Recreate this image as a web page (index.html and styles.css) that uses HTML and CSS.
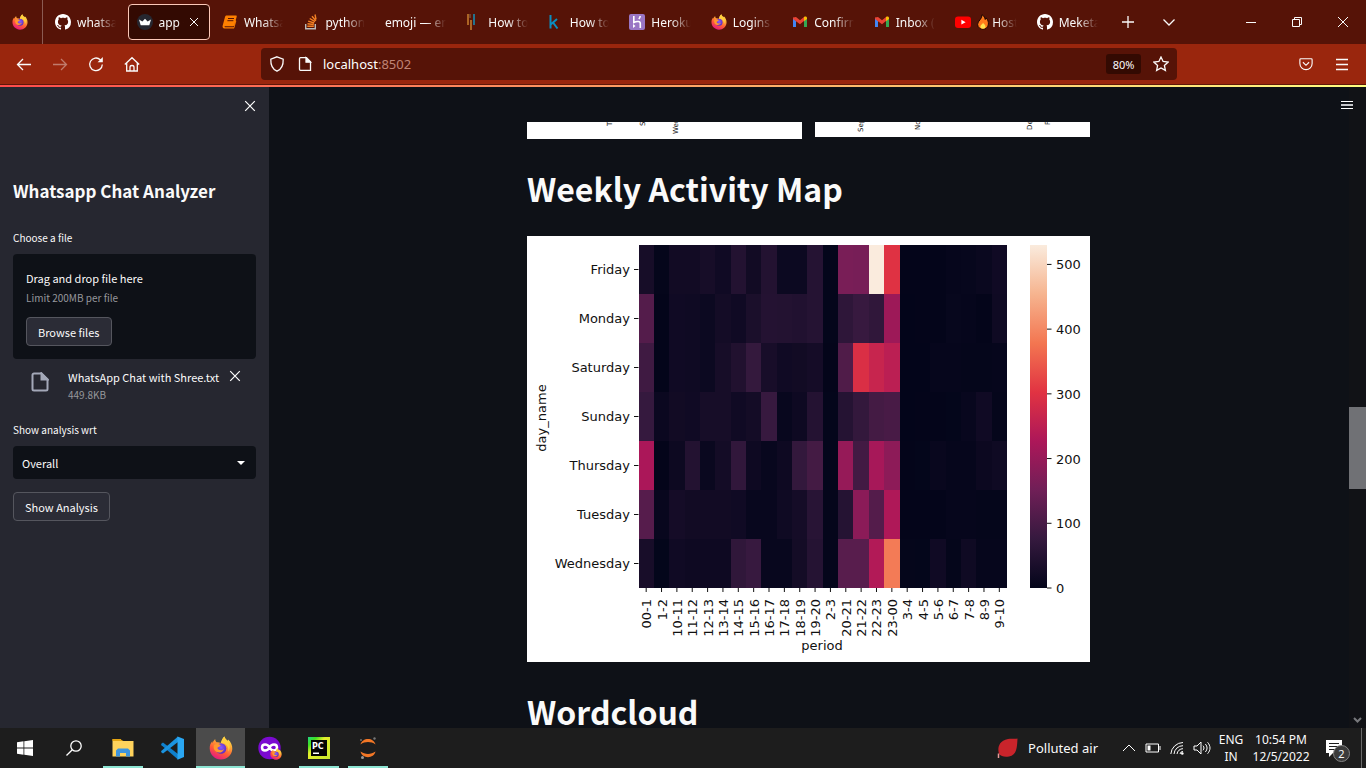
FILE: index.html
```html
<!DOCTYPE html>
<html lang="en">
<head>
<meta charset="utf-8">
<title>app · Streamlit</title>
<link rel="stylesheet" href="styles.css">
</head>
<body>
<svg class="sprite" aria-hidden="true">
  <defs>
    <linearGradient id="fox" x1="0.8" y1="0" x2="0.3" y2="1">
      <stop offset="0" stop-color="#fff44f"/><stop offset="0.35" stop-color="#ffa436"/><stop offset="0.65" stop-color="#ff5a36"/><stop offset="1" stop-color="#e31587"/>
    </linearGradient>
    <radialGradient id="globe" cx="0.5" cy="0.4" r="0.6">
      <stop offset="0" stop-color="#8a5cff"/><stop offset="1" stop-color="#5b2bbd"/>
    </radialGradient>
  </defs>
  <symbol id="i-firefox" viewBox="0 0 24 24">
    <path fill="url(#fox)" d="M15.500.5c.3 2 1.700 3 2.900 4.200.6-.2.700-.8.700-1.200C22 6 23.500 9.500 23.300 13 22.900 19.200 18 23.500 12 23.500S.8 18.700.7 12.500C.6 9.500 1.700 7 3.300 5.300l.2 2c.5-1.600 1.500-3.200 2.700-4.300 0 1.200.4 2.300 1.400 3.300 1.500-.2 3 0 4 .8C12.500 5 13.500 2 15.500.5z"/>
    <circle cx="12" cy="12.500" r="5.300" fill="url(#globe)"/>
    <path fill="#ff9a2e" d="M5 9c2-1.800 5-1.200 6.800.2-.9 1.600-2.600 1.300-3.400 2.700 1 2.600 4.600 3 6.500 1-1 4.500-7.700 5-9.700.6C4.500 12 4.500 10.500 5 9z"/>
    <path fill="#ffcf3f" d="M15.500.5c.3 2 1.700 3 2.900 4.200 2.600 3 3.100 7.300 1 10.800.5-4-1-6.500-3.600-7.800-1.400-.8-2.400-.8-3.900-.7C12.500 5 13.500 2 15.500.5z"/>
  </symbol>
  <symbol id="i-github" viewBox="0 0 16 16">
    <path fill="#fff" d="M8 0C3.580 0 0 3.580 0 8c0 3.540 2.290 6.530 5.470 7.590.4.070.55-.17.55-.38 0-.19-.01-.82-.01-1.490-2.010.37-2.530-.49-2.690-.94-.09-.23-.48-.94-.82-1.130-.28-.15-.68-.52-.01-.53.63-.01 1.080.58 1.230.82.72 1.210 1.870.87 2.330.66.070-.52.28-.87.51-1.070-1.780-.2-3.640-.89-3.640-3.950 0-.87.31-1.590.82-2.150-.08-.2-.36-1.020.08-2.120 0 0 .67-.21 2.200.82.64-.18 1.320-.27 2-.27s1.360.09 2 .27c1.530-1.040 2.200-.82 2.200-.82.44 1.100.16 1.920.08 2.120.51.56.82 1.270.82 2.150 0 3.070-1.870 3.750-3.650 3.950.29.25.54.73.54 1.480 0 1.070-.01 1.930-.01 2.200 0 .21.15.46.55.38A8.010 8.010 0 0 0 16 8c0-4.420-3.580-8-8-8z"/>
  </symbol>
  <symbol id="i-gmail" viewBox="0 0 16 16">
    <path fill="#4285f4" d="M1 3.500v9.500h3V7z"/><path fill="#34a853" d="M15 3.500v9.500h-3V7z"/>
    <path fill="#ea4335" d="M1 3.500l3-.5 4 3.200L12 3v4l-4 3.200L1 5z"/><path fill="#fbbc04" d="M12 3c1.500-1 3-.4 3 1v1l-3 2.300z"/>
  </symbol>
</svg>

<header class="browser">
  <div class="tabbar">
    <nav class="tabs" aria-label="Tabs">
      <a class="pinned" href="#" aria-label="Firefox"><svg class="fav"><use href="#i-firefox"/></svg></a>
      <a class="tab" href="#"><svg class="fav"><use href="#i-github"/></svg><span class="name">whatsap</span></a>
      <a class="tab current" href="#"><svg class="fav" viewBox="0 0 16 16"><circle cx="8" cy="8" r="8" fill="#262730"/><path fill="#fff" d="M2 5.500l3.400 2L8 4.700l2.600 2.800 3.400-2-1.700 5.700H3.700z"/></svg><span class="name">app ·</span><svg class="tab-x" viewBox="0 0 10 10"><path d="M1 1l8 8M9 1L1 9"/></svg></a>
      <a class="tab" href="#"><svg class="fav" viewBox="0 0 16 16"><path fill="#ff8000" d="M4.500 1.500h9.300c.8 0 1.100.6.9 1.200l-2.500 8.600c-.2.600-.6.900-1.200.9H3c-.8.200-.7 1 .1 1h8.600l2-7 .6.700-2 7c-.2.500-.5.700-1 .7H2.500C.8 14.600.2 13 .7 11.500L3 3c.2-.9.700-1.500 1.500-1.500z"/><path stroke="#561307" d="M6 4.500h6M5.400 6.700h6"/></svg><span class="name">Whatsa</span></a>
      <a class="tab" href="#"><svg class="fav" viewBox="0 0 16 16" fill="none"><path fill="none" stroke="#bcbbbb" stroke-width="1.400" d="M2.700 10v4.800h9.600V10"/><path fill="none" stroke="#f48024" stroke-width="1.400" d="M4.300 12.300h6.500M4.500 9.800l6.300.7M5.200 7.200l6 1.800M6.700 4.500l5.300 3.200M9 2.200l3.900 4.600M12 .5l1 5"/></svg><span class="name">python</span></a>
      <a class="tab" href="#"><span class="name">emoji — em</span></a>
      <a class="tab" href="#"><svg class="fav" viewBox="0 0 16 16"><path stroke="#c9802f" stroke-width="1.500" d="M2 0v11M5 6v10"/><path stroke="#8d6a4a" stroke-width="1" d="M4 0v4"/><path stroke="#1593bd" stroke-width="1.500" d="M8 0v11"/></svg><span class="name">How to</span></a>
      <a class="tab" href="#"><svg class="fav" viewBox="0 0 16 16"><path fill="none" stroke="#0b8ec0" stroke-width="2" d="M2.500 1v13.500M9 5L3 10.200M5 8.500l4.500 6"/></svg><span class="name">How to</span></a>
      <a class="tab" href="#"><svg class="fav" viewBox="0 0 16 16"><rect width="16" height="16" rx="2" fill="#9a75c4"/><path fill="none" stroke="#fff" stroke-width="1.600" d="M4.800 2v6.500c3-1.500 6.500-1.500 6.500 1V14M11.200 2c0 1.500-.7 2.300-1.400 3"/><path fill="#fff" d="M4 10l2.500 2L4 14z"/></svg><span class="name">Heroku</span></a>
      <a class="tab" href="#"><svg class="fav"><use href="#i-firefox"/></svg><span class="name">Logins</span></a>
      <a class="tab" href="#"><svg class="fav"><use href="#i-gmail"/></svg><span class="name">Confirm</span></a>
      <a class="tab" href="#"><svg class="fav"><use href="#i-gmail"/></svg><span class="name">Inbox (2</span></a>
      <a class="tab" href="#"><svg class="fav" viewBox="0 0 16 16"><rect y="2.500" width="16" height="11.500" rx="3" fill="#f00"/><path fill="#fff" d="M6.400 5.800l4.200 2.400-4.200 2.400z"/></svg><svg class="fire" viewBox="0 0 12 16"><path fill="#ff7a1a" stroke="#1c0500" d="M5 .7c2.500 1.500 3 3.300 3 4.800.8-.4 1-1 1.100-1.600C11 5.800 11.500 8 11.400 10c-.2 3.300-2.500 5.300-5.400 5.300S.6 13.300.6 10.300C.6 6.800 5.500 5 5 .7z"/><path fill="#ffe14d" d="M6 8.500c.3 1.500 2.500 2 2.500 4 0 1.300-1 2.300-2.500 2.300s-2.600-1-2.600-2.300C3.400 10.800 5.800 10.400 6 8.500z"/></svg><span class="name">Host</span></a>
      <a class="tab" href="#"><svg class="fav"><use href="#i-github"/></svg><span class="name">Meketa</span></a>
    </nav>
    <button class="strip-btn" aria-label="New tab"><svg viewBox="0 0 14 14"><path d="M7 1v12M1 7h12"/></svg></button>
    <button class="strip-btn" aria-label="List all tabs"><svg viewBox="0 0 14 14"><path d="M1.500 4.500L7 10l5.500-5.500"/></svg></button>
    <div class="window-btns">
      <button aria-label="Minimize"><svg viewBox="0 0 10 10"><path d="M0 5.500h10"/></svg></button>
      <button aria-label="Restore"><svg viewBox="0 0 10 10"><path d="M.5 2.500h7v7h-7zM2.500 2.500v-2h7v7h-2"/></svg></button>
      <button aria-label="Close"><svg viewBox="0 0 10 10"><path d="M0 0l10 10M10 0L0 10"/></svg></button>
    </div>
  </div>
  <div class="toolbar">
    <div class="nav-btns">
      <button aria-label="Back"><svg viewBox="0 0 16 16"><path d="M15 8.500H1.500M7 3L1.500 8.500 7 14"/></svg></button>
      <button aria-label="Forward" disabled><svg viewBox="0 0 16 16"><path d="M1 8.500h13.500M9 3l5.500 5.500L9 14"/></svg></button>
      <button aria-label="Reload"><svg viewBox="0 0 16 16"><path d="M14.300 8.500a6.300 6.300 0 1 1-2-4.800l1 1"/><path fill="currentColor" stroke="none" d="M14.800 1v5.200H9.600z"/></svg></button>
      <button aria-label="Home"><svg viewBox="0 0 16 16"><path d="M.8 8.500L8 1.700l7.200 6.800M2.700 7v8h10.600V7M6 15v-3.700c0-2.400 4-2.400 4 0V15"/></svg></button>
    </div>
    <div class="urlbar">
      <svg class="url-icon" viewBox="0 0 16 16"><path d="M8 .8l6.200 2.400c.2 5.500-1 9.800-6.200 12C2.800 13 1.600 8.700 1.800 3.200z"/></svg>
      <svg class="url-icon" viewBox="0 0 16 16"><path d="M3.500 1.700h6l4 4v8.600h-10a1 1 0 0 1-1-1V2.700a1 1 0 0 1 1-1z"/><path fill="currentColor" d="M9 1.700v4.500h4.500z"/></svg>
      <div class="url"><span class="host">localhost</span>:8502</div>
      <button class="zoom">80%</button>
      <button class="star" aria-label="Bookmark"><svg viewBox="0 0 16 16"><path d="M8 1l2.100 4.500 5 .6-3.700 3.400 1 4.900L8 12l-4.400 2.400 1-4.900L.9 6.100l5-.6z"/></svg></button>
    </div>
    <div class="tool-right">
      <button aria-label="Pocket"><svg viewBox="0 0 16 16"><path d="M2 2h12a1 1 0 0 1 1 1v4.500a7 7 0 0 1-14 0V3a1 1 0 0 1 1-1zM4.500 6L8 9.500 11.500 6"/></svg></button>
      <button aria-label="Menu"><svg viewBox="0 0 14 14"><path d="M1 2.500h12M1 7.500h12M1 12.500h12"/></svg></button>
    </div>
  </div>
</header>
<div class="rainbow"></div>

<div class="app">
  <aside class="sidebar">
    <div class="side-top"><button class="plain" aria-label="Close sidebar"><svg class="x" viewBox="0 0 10 10"><path d="M1 1l8 8M9 1L1 9"/></svg></button></div>
    <h2>Whatsapp Chat Analyzer</h2>
    <label class="field" for="browse">Choose a file</label>
    <div class="drop">
      <p class="drop-main">Drag and drop file here</p>
      <p class="small">Limit 200MB per file</p>
      <button class="btn" id="browse">Browse files</button>
    </div>
    <div class="file">
      <svg class="doc" viewBox="0 0 18 20"><path d="M3 1.500h7.500l6 6V17a1.500 1.500 0 0 1-1.500 1.500H3A1.500 1.500 0 0 1 1.500 17V3A1.500 1.500 0 0 1 3 1.500z"/><path fill="#a3a8b8" d="M10.500 1.500v6h6z"/></svg>
      <div class="file-text"><p class="file-name">WhatsApp Chat with Shree.txt</p><p class="small">449.8KB</p></div>
      <button class="plain" aria-label="Remove file"><svg class="x" viewBox="0 0 10 10"><path d="M1 1l8 8M9 1L1 9"/></svg></button>
    </div>
    <label class="field" for="user">Show analysis wrt</label>
    <div class="select">
      <select id="user"><option>Overall</option></select>
      <svg viewBox="0 0 8 4"><path fill="#fff" d="M0 0h8L4 4z"/></svg>
    </div>
    <button class="btn">Show Analysis</button>
  </aside>

  <main class="main">
    <div class="main-top"><button class="plain" aria-label="App menu"><svg class="burger" viewBox="0 0 12 10"><path stroke="#fff" d="M0 1.500h12M0 8.500h12"/><path stroke="#c4c5c9" stroke-width="2" d="M0 5h12"/></svg></button></div>
    <div class="block">
      <div class="pair">
        <svg class="clip" viewBox="0 0 275 17"><rect width="275" height="17" fill="#fff"/>
          <text transform="translate(85 4) rotate(-90)">T</text><text transform="translate(118 4) rotate(-90)">S</text><text transform="translate(151 12) rotate(-90)">Wed</text></svg>
        <svg class="clip" viewBox="0 0 275 15"><rect width="275" height="15" fill="#fff"/>
          <text transform="translate(48 10) rotate(-90)">Sep</text><text transform="translate(105 8) rotate(-90)">No</text><text transform="translate(217 8) rotate(-90)">De</text><text transform="translate(235 3) rotate(-90)">F</text></svg>
      </div>
      <h1>Weekly Activity Map</h1>
      <svg class="heatmap" id="heatmap" viewBox="0 0 563 426" role="img" aria-label="Weekly activity heatmap">
        <defs><linearGradient id="rocket" x1="0" y1="1" x2="0" y2="0">
          <stop offset="0" stop-color="#03051a"/><stop offset="0.143" stop-color="#35193e"/><stop offset="0.286" stop-color="#701f57"/><stop offset="0.429" stop-color="#ad1759"/><stop offset="0.571" stop-color="#e13342"/><stop offset="0.714" stop-color="#f37651"/><stop offset="0.857" stop-color="#f6b48f"/><stop offset="1" stop-color="#faebdd"/>
        </linearGradient></defs>
        <rect width="563" height="426" fill="#fff"/>
        <g id="cells" shape-rendering="crispEdges"></g>
        <g id="axes"></g>
        <rect x="503" y="9" width="17" height="343" fill="url(#rocket)"/>
        <text x="295" y="414" text-anchor="middle">period</text>
        <text transform="translate(19 182) rotate(-90)" text-anchor="middle">day_name</text>
      </svg>
      <h1>Wordcloud</h1>
    </div>
    <div class="scrollbar"><span class="thumb"></span><svg viewBox="0 0 9 6"><path d="M1 1l3.500 3.500L8 1"/></svg></div>
  </main>
</div>

<footer class="taskbar">
  <button class="task" aria-label="Start"><svg width="16" height="16" viewBox="0 0 16 16"><path fill="#fff" d="M0 2.200L6.500 1.300v6.300H0zM7.300 1.200L16 0v7.600H7.300zM0 8.400h6.500v6.300L0 13.800zM7.300 8.400H16V16l-8.700-1.200z"/></svg></button>
  <button class="task" aria-label="Search"><svg width="16" height="16" viewBox="0 0 16 16" fill="none" stroke="#fff" stroke-width="1.300"><circle cx="10" cy="6" r="5.200"/><path d="M6.300 9.700L.5 15.500"/></svg></button>
  <button class="task open" aria-label="File Explorer"><svg width="22" height="20" viewBox="0 0 22 20"><path fill="#e8a317" d="M.5 1h8l1.500 2h-9.500z"/><path fill="#ffd35c" d="M.5 3h21v15.500H.5z"/><path fill="#e5a512" d="M.5 3h9l2-1h-2L8.500 1h-8z"/><path fill="#3f95dd" d="M4 18.500V12.500l2-2h10l2 2v6h-4v-3.500H8v3.500z"/></svg></button>
  <button class="task" aria-label="Visual Studio Code"><svg width="24" height="24" viewBox="0 0 24 24"><path fill="#0f80cc" d="M1 8l2-1.500L18 18v5.500L1.500 9.300z"/><path fill="#1b94e0" d="M1 16l2 1.500L18 6V.5L1.500 14.700z"/><path fill="#2aa7f2" d="M17.500.5L24 3v18l-6.500 2.700z"/></svg></button>
  <button class="task open active" aria-label="Firefox"><svg width="24" height="24"><use href="#i-firefox"/></svg></button>
  <button class="task" aria-label="Firefox private"><svg width="24" height="24" viewBox="0 0 24 24"><circle cx="11.500" cy="12" r="11.200" fill="#7b0ad0"/><path fill="none" stroke="#fff" stroke-width="2.500" d="M11.500 11.500c-2-4-7.500-4-7.500 0s5.500 4 7.500 0 7.500-4 7.500 0-5.500 4-7.500 0z"/><svg x="12" y="12" width="12" height="12" viewBox="0 0 24 24"><use href="#i-firefox"/></svg></svg></button>
  <button class="task open" aria-label="PyCharm"><svg width="22" height="22" viewBox="0 0 22 22"><defs><linearGradient id="pc" x1="0" y1="0" x2="1" y2="1"><stop offset="0" stop-color="#21d789"/><stop offset="0.200" stop-color="#3fe020"/><stop offset="0.400" stop-color="#e4ee2b"/><stop offset="1" stop-color="#c8e82e"/></linearGradient></defs><rect width="22" height="22" fill="url(#pc)"/><rect x="3" y="3" width="16" height="16" fill="#050505"/><text class="pc" x="4" y="12">PC</text><path fill="#fff" d="M5 15.500h6v1.500H5z"/></svg></button>
  <button class="task open" aria-label="Jupyter"><svg width="18" height="22" viewBox="0 0 18 22"><path fill="#f37726" d="M1.500 7.500C3 0 15 0 16.500 7.500 12 4.300 6 4.300 1.500 7.500zM1.500 14.500C3 22 15 22 16.500 14.500 12 17.700 6 17.700 1.500 14.500z"/><circle cx="15.500" cy="1.500" r="1.200" fill="#777"/><circle cx="3.500" cy="20.500" r="1.500" fill="#9a9a9a"/><circle cx="2" cy="3" r=".9" fill="#777"/></svg></button>
  <div class="tray">
    <div class="weather"><svg width="21" height="21" viewBox="0 0 21 21"><path fill="#c9242b" d="M20.500.5C20 9 20 17 12 18.500c-5 .8-8-.5-9.500-2C1 15-1 3 11 1c4-.6 7 .3 9.500-.5z"/><path fill="none" stroke="#e79a98" stroke-width="1.500" d="M1.500 15.500v4.500"/></svg><span>Polluted air</span></div>
    <svg class="tray-icon up" viewBox="0 0 14 14"><path d="M1 10l6-6 6 6"/></svg>
    <svg class="tray-icon batt" viewBox="0 0 16 14"><path d="M1 3h12.500v8H1zM15 5v4"/><path fill="#fff" stroke="none" d="M2.500 4.500h3v5h-3z"/></svg>
    <svg class="tray-icon wifi" viewBox="0 0 14 14"><path d="M.8 13A12.500 12.500 0 0 1 13 1.500M4 13a9 9 0 0 1 9-8.300M7 13a6 6 0 0 1 6-5.300M10 13a3 3 0 0 1 3-2.500"/><circle cx="12.300" cy="12.500" r="1.300" fill="#fff" stroke="none"/></svg>
    <svg class="tray-icon vol" viewBox="0 0 18 14"><path d="M1 5h3l4-4v12L4 9H1zM10 4.700c1.300 1.500 1.300 3.100 0 4.600M12.300 3c2.300 2.500 2.300 5.500 0 8M14.600 1.300c3.200 3.700 3.200 7.700 0 11.400"/></svg>
    <div class="stack lang"><span>ENG</span><span>IN</span></div>
    <div class="stack clock"><span>10:54 PM</span><span>12/5/2022</span></div>
    <button class="notes" aria-label="2 notifications"><svg width="18" height="17" viewBox="0 0 18 17"><path fill="#fff" d="M1 0h16v13h-9l-4 4v-4H1z"/><path stroke="#1d1d1d" d="M4 3.500h10M4 6.500h10M4 9.500h7"/></svg><span class="badge">2</span></button>
    <span class="peek"></span>
  </div>
</footer>
<script src="chart.js"></script>
</body>
</html>
```

FILE: styles.css
```css
* { box-sizing: border-box; }
body {
  margin: 0;
  height: 100vh;
  display: flex;
  flex-direction: column;
  overflow: hidden;
  background: #0e1117;
  color: #fafafa;
  font-family: "Noto Sans CJK SC", "Open Sans", sans-serif;
}
button { font: inherit; color: inherit; background: none; border: 0; padding: 0; }
svg { display: block; flex: none; }
p, h1, h2 { margin: 0; }
a { color: inherit; text-decoration: none; }
.sprite { width: 0; height: 0; position: absolute; }

/* browser frame */
.browser, .taskbar { font-family: "Noto Sans", "Open Sans", sans-serif; flex: none; }
.browser svg { fill: none; stroke: currentColor; }
.browser .fav, .browser .fire { fill: black; stroke: none; }
.tabbar { height: 44px; display: flex; align-items: center; background: #561307; }
.tabs { display: flex; flex: 0 1 1110px; min-width: 0; height: 44px; align-items: center; }
.pinned { flex: none; width: 43px; height: 44px; padding-left: 12px; margin-right: 4px; display: flex; align-items: center; border-right: 1px solid #8b5b52; }
.fav { width: 16px; height: 16px; }
.fire { width: 12px; height: 16px; margin-right: -3px; }
.tab { flex: 1 1 0; min-width: 0; height: 36px; margin-right: 4px; padding: 0 8px; display: flex; align-items: center; gap: 6px; font-size: 12px; border-radius: 4px; }
.name {
  flex: 1;
  min-width: 0;
  overflow: hidden;
  white-space: nowrap;
  mask-image: linear-gradient(to left, transparent, black 20px);
}
.current { background: #330a02; border: 1px solid #fbc8b8; padding: 0 10px 0 8px; gap: 5px; }
.current .name { mask-image: linear-gradient(to left, transparent, black 6px); }
.tab-x { width: 10px; height: 10px; }
.strip-btn { width: 41px; height: 44px; display: grid; place-items: center; }
.tabs + .strip-btn { margin-left: -3px; }
.strip-btn svg { width: 14px; height: 14px; stroke-width: 1.300; }
.window-btns { margin-left: auto; display: flex; }
.window-btns button { width: 46px; height: 44px; display: grid; place-items: center; }
.window-btns svg { width: 10px; height: 10px; }
.toolbar { height: 41px; padding-left: 6px; display: flex; align-items: center; background: #9a260d; border-bottom: 1px solid #5d1709; }
.toolbar svg { width: 16px; height: 16px; stroke-width: 1.300; }
.nav-btns { display: flex; width: 255px; }
.nav-btns button { width: 36px; height: 32px; display: grid; place-items: center; }
.nav-btns button:disabled { opacity: .4; }
.urlbar { flex: 1; height: 32px; padding: 0 8px; display: flex; align-items: center; background: #561307; border-radius: 4px; }
.url-icon { margin-right: 12px; }
.url { flex: 1; font-size: 13px; color: #c08476; margin-left: -2px; }
.host { color: #fff; }
.zoom { width: 35px; height: 20px; border-radius: 3px; background: #330a02; font-size: 11px; margin-right: 12px; }
.tool-right { width: 189px; padding-right: 6px; display: flex; justify-content: flex-end; }
.tool-right button { width: 36px; height: 32px; display: grid; place-items: center; }
.tool-right svg { width: 14px; height: 14px; }
.rainbow { flex: none; height: 2px; background: linear-gradient(to right, #ff4b4b, #fffd80); }

/* streamlit app */
.app { flex: 1; min-height: 0; display: flex; }
.plain { display: grid; place-items: center; }
.x { width: 12px; height: 12px; fill: none; stroke: #fff; }
.sidebar { width: 269px; flex: none; padding: 0 13px; background: #262730; font-size: 11px; line-height: 20px; }
.side-top { height: 92px; padding-top: 13px; display: flex; justify-content: flex-end; align-items: flex-start; }
h2 { font-size: 17px; line-height: 24px; font-weight: 600; margin-bottom: 29px; }
.field { display: block; height: 14px; margin-bottom: 8px; font-size: 10px; line-height: 12px; }
.drop { height: 105px; padding: 14px 13px; background: #0e1117; border-radius: 4px; }
.small { font-size: 10px; color: #96979c; }
.drop .small { margin-bottom: 9px; }
.btn { height: 29px; padding: 0 11px; line-height: 20px; background: #2b2c36; border: 1px solid #55565e; border-radius: 4px; }
.file { height: 65px; padding: 8px 15px 0 18px; display: flex; align-items: flex-start; }
.doc { width: 18px; height: 20px; margin: 5px 19px 0 0; fill: none; stroke: #a3a8b8; stroke-width: 2; }
.file-text { flex: 1; white-space: nowrap; }
.file-text .small { line-height: 15px; }
.file .plain { height: 18px; }
.select { display: grid; align-items: center; margin-bottom: 13px; }
.select > * { grid-area: 1 / 1; }
.select select { appearance: none; height: 33px; padding: 0 9px; font: inherit; color: inherit; background: #0e1117; border: 0; border-radius: 4px; }
.select svg { width: 8px; height: 4px; justify-self: end; margin-right: 11px; }

.main { flex: 1; min-width: 0; position: relative; isolation: isolate; padding-right: 17px; overflow: hidden; }
.main-top { height: 35px; padding: 13px 13px 0 0; display: flex; justify-content: flex-end; align-items: flex-start; margin-right: -17px; }
.burger { width: 12px; height: 10px; }
.block { max-width: 590px; margin: 0 auto; padding: 0 14px 0 13px; }
.pair { display: grid; grid-template-columns: 1fr 1fr; gap: 13px; align-items: start; }
.clip { width: 100%; }
.clip text { font-family: "DejaVu Sans", sans-serif; font-size: 7px; fill: #111; }
h1 { font-size: 32px; font-weight: 700; line-height: 42px; padding: 28px 0 27px; }
.heatmap { width: 100%; }
.heatmap text { font-family: "DejaVu Sans", sans-serif; font-size: 13px; fill: #111; }
.heatmap line { stroke: #111; }
.scrollbar { position: absolute; inset: 0 0 0 auto; width: 17px; background: #111216; display: flex; flex-direction: column; align-items: center; z-index: -1; }
.thumb { width: 17px; height: 82px; margin-top: 320px; background: #707175; }
.scrollbar svg { width: 9px; height: 6px; margin: auto 0 5px; fill: none; stroke: #77787c; stroke-width: 2; }

/* windows taskbar */
.taskbar { height: 40px; display: flex; background: #1d1d1d; font-size: 12px; }
.task { width: 49px; height: 40px; display: grid; place-items: center; }
.open { background: linear-gradient(#8de5d3, #8de5d3) center bottom / 40px 2px no-repeat; }
.open.active { background: linear-gradient(#8de5d3, #8de5d3) center bottom / 100% 2px no-repeat #4b4b4b; }
.pc { font: 700 8px "DejaVu Sans", sans-serif; fill: #fff; }
.tray { margin-left: auto; display: flex; align-items: center; }
.weather { display: flex; align-items: center; gap: 10px; margin-right: 24px; font-size: 13px; }
.tray-icon { width: 14px; height: 14px; margin-right: 9px; fill: none; stroke: #fff; }
.batt { width: 16px; }
.vol { width: 18px; margin-right: 8px; }
.stack { display: flex; flex-direction: column; align-items: center; line-height: 17px; white-space: nowrap; }
.lang { width: 24px; margin-right: 11px; }
.clock { width: 54px; margin-right: 17px; }
.notes { position: relative; width: 24px; height: 18px; margin-right: 12px; }
.badge { position: absolute; left: 8px; top: 6px; width: 17px; height: 17px; border-radius: 9px; background: #3b3b3b; border: 1px solid #858585; font-size: 11px; line-height: 15px; }
.peek { width: 5px; height: 40px; border-left: 1px solid #6a6a6a; }
```

FILE: chart.js
```js
const rows = {
  Friday: [30,3,22,22,30,20,48,22,48,14,14,52,2,162,160,530,300,1,1,1,4,6,10,20],
  Monday: [115,1,20,18,14,26,20,36,50,48,46,52,2,65,78,68,207,0,1,1,6,5,1,18],
  Saturday: [88,1,20,18,14,30,45,74,32,20,22,28,1,110,292,265,248,0,0,5,5,3,3,4],
  Sunday: [75,12,22,20,30,30,20,26,78,8,16,50,2,52,72,95,100,0,1,1,2,8,20,3],
  Thursday: [225,1,15,48,10,26,70,16,8,16,72,95,2,198,92,220,188,1,2,9,4,4,13,18],
  Tuesday: [118,8,28,22,22,22,20,8,8,18,28,56,3,52,185,115,230,1,1,1,4,5,3,3],
  Wednesday: [32,2,20,16,16,16,68,78,8,8,26,52,3,120,120,235,385,3,2,20,3,18,5,5]
};
const periods = ["00-1","1-2","10-11","11-12","12-13","13-14","14-15","15-16","16-17","17-18","18-19","19-20","2-3","20-21","21-22","22-23","23-00","3-4","4-5","5-6","6-7","7-8","8-9","9-10"];
const rocket = [[3,5,26],[53,25,62],[112,31,87],[173,23,89],[225,51,66],[243,118,81],[246,180,143],[250,235,221]];
const max = 530, left = 111.5, top0 = 9, width = 368.5, height = 343;

function colour(v) {
  const t = v / max * 7, i = Math.min(6, Math.floor(t)), f = t - i;
  return `rgb(${rocket[i].map((c, k) => Math.round(c + (rocket[i + 1][k] - c) * f))})`;
}

const cw = width / periods.length, ch = height / 7;
let cells = "", axes = "";
Object.entries(rows).forEach(([day, values], r) => {
  const y = top0 + r * ch, mid = y + ch / 2;
  values.forEach((v, c) => {
    cells += `<rect x="${left + c * cw}" y="${y}" width="${cw}" height="${ch}" fill="${colour(v)}"/>`;
  });
  axes += `<line x1="107" x2="111.5" y1="${mid}" y2="${mid}"/><text x="103" y="${mid + 4}" text-anchor="end">${day}</text>`;
});
periods.forEach((p, c) => {
  const x = left + (c + 0.5) * cw;
  axes += `<line x1="${x}" x2="${x}" y1="352" y2="356"/><text transform="translate(${x + 5} 363) rotate(-90)" text-anchor="end">${p}</text>`;
});
for (let v = 0; v <= 500; v += 100) {
  const y = top0 + height - v / max * height;
  axes += `<line x1="520" x2="524.5" y1="${y}" y2="${y}"/><text x="529" y="${y + 5}">${v}</text>`;
}
document.getElementById("cells").innerHTML = cells;
document.getElementById("axes").innerHTML = axes;
```
